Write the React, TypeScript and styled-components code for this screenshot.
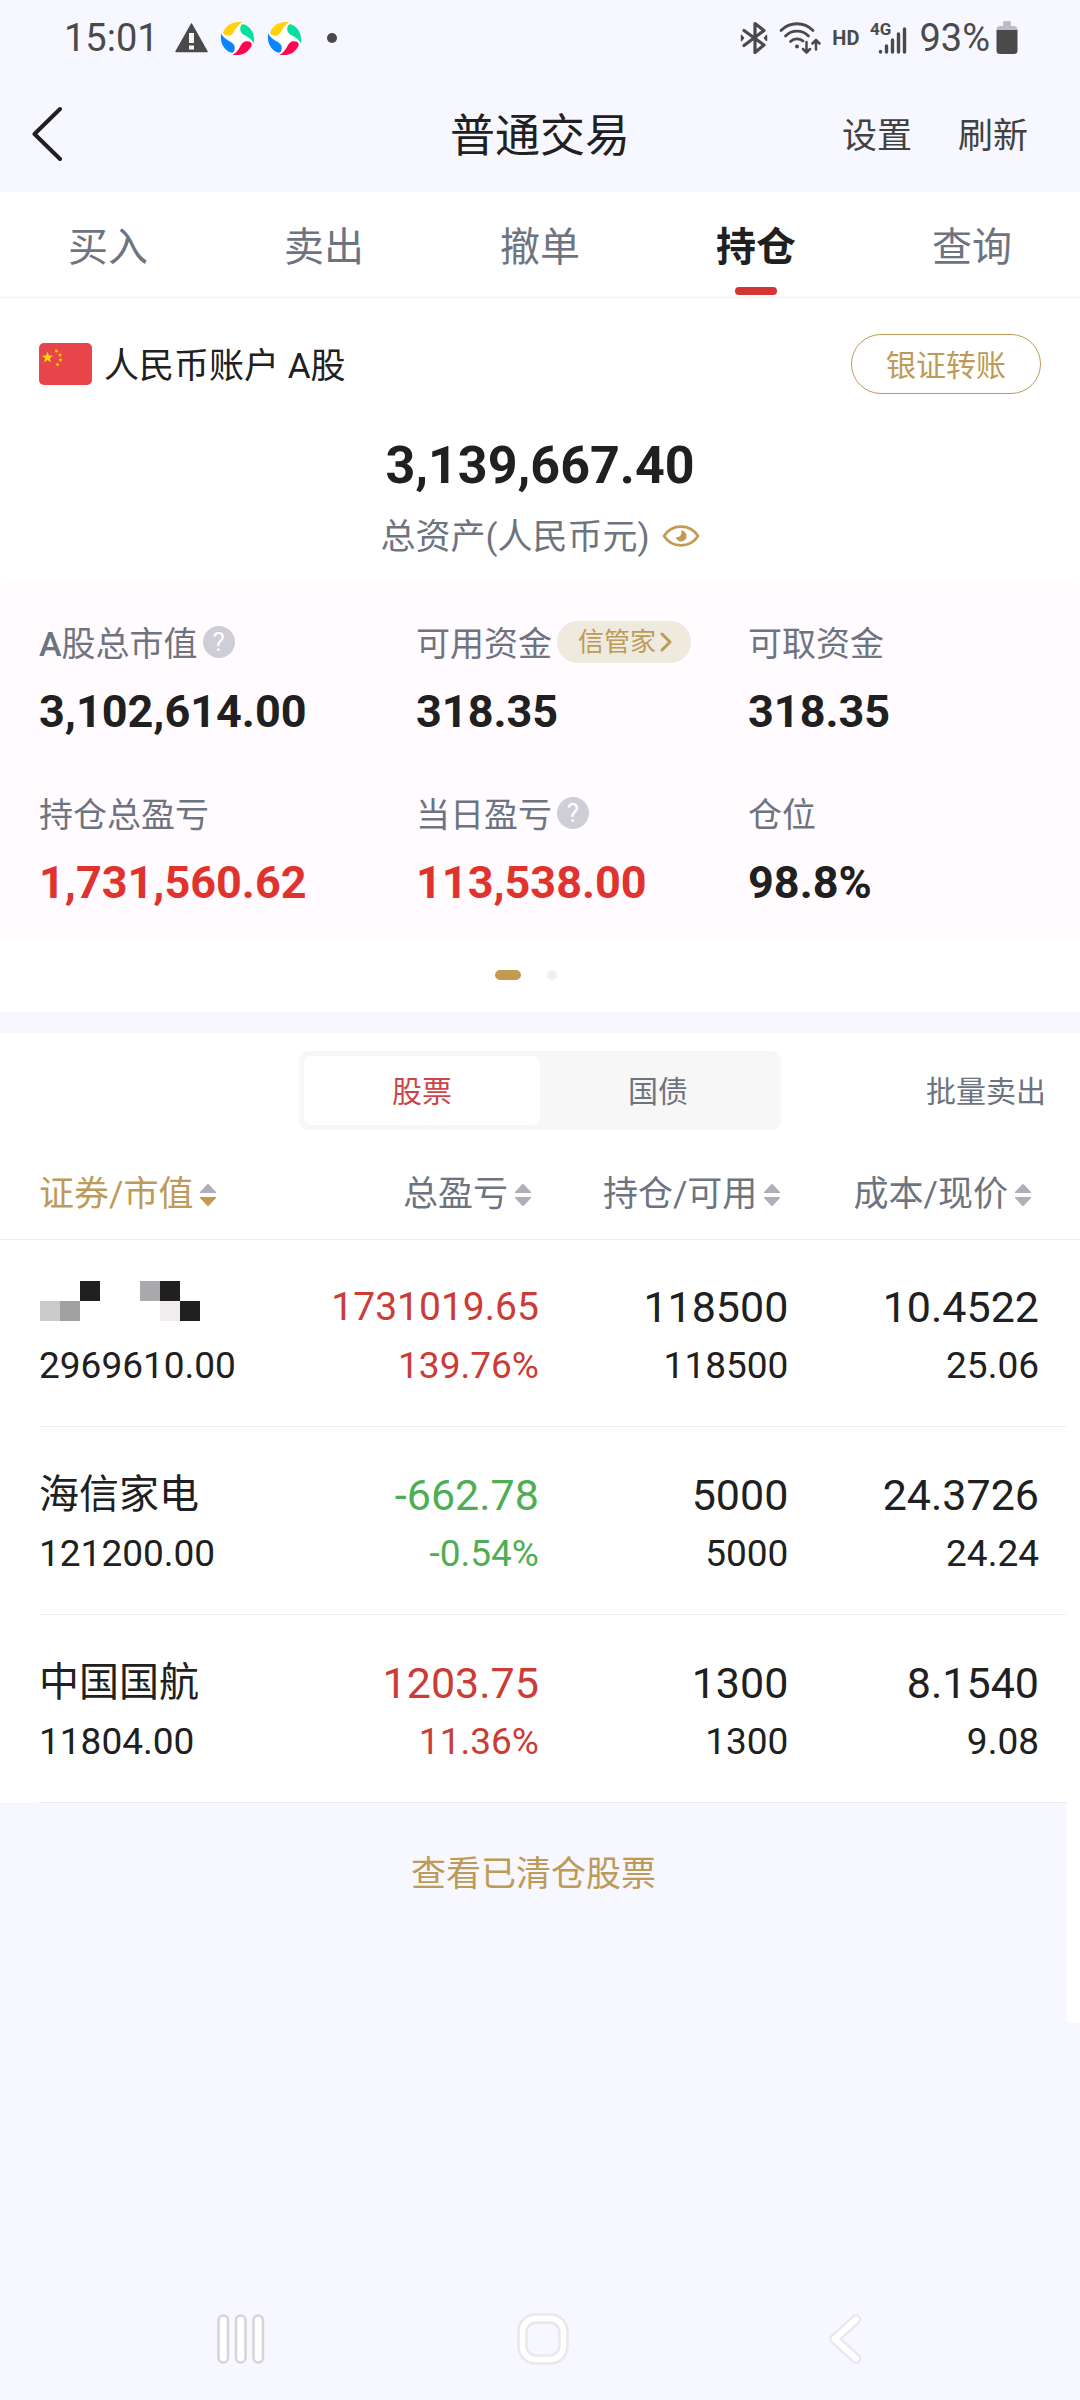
import React, { useState } from 'react';
import styled, { createGlobalStyle, css } from 'styled-components';

const color = {
  page: '#f7f7ff',
  ink: '#202020',
  muted: '#6e747f',
  gold: '#bd9a57',
  red: '#e1332e',
  rise: '#cc3b36',
  fall: '#4fae53',
  line: '#ededef',
};

const GlobalStyle = createGlobalStyle`
  * { box-sizing: border-box; }
  body {
    margin: 0;
    background: ${color.page};
    color: ${color.ink};
    font-family: Roboto, "Noto Sans CJK SC", sans-serif;
  }
  button {
    font: inherit;
    color: inherit;
    background: none;
    border: 0;
    padding: 0;
    cursor: pointer;
  }
  svg { display: block; flex: none; }
`;

const Page = styled.div`
  min-height: 100vh;
  display: flex;
  flex-direction: column;
`;

const StatusBar = styled.div`
  height: 76px;
  padding: 0 62px 0 64px;
  display: flex;
  align-items: center;
  justify-content: space-between;
  font-size: 38px;
  color: #4a4a4a;
`;

const StatusGroup = styled.div<{ $gap: number }>`
  display: flex;
  align-items: center;
  gap: ${(p) => p.$gap}px;
`;

const HdMark = styled.span`
  font-size: 20px;
  font-weight: 700;
`;

const Header = styled.header`
  height: 116px;
  padding: 0 52px 0 32px;
  display: grid;
  grid-template-columns: 1fr auto 1fr;
  align-items: center;
`;

const BackButton = styled.button`
  justify-self: start;
`;

const Title = styled.h1`
  margin: 0;
  padding: 6px 0 0 20px;
  font-size: 45px;
  font-weight: 400;
  line-height: 64px;
`;

const HeaderActions = styled.div`
  justify-self: end;
  padding-top: 6px;
  display: flex;
  gap: 46px;
  font-size: 35px;
  line-height: 48px;
  color: #414141;
`;

const Tabs = styled.nav`
  display: grid;
  grid-template-columns: repeat(5, 1fr);
  background: #fff;
  border-bottom: 1px solid #f2f2f5;
`;

const Tab = styled.button<{ $active: boolean }>`
  height: 105px;
  padding-top: 25px;
  display: flex;
  flex-direction: column;
  align-items: center;
  justify-content: space-between;
  font-size: 40px;
  line-height: 62px;
  color: ${color.muted};
  &::after {
    content: '';
    width: 42px;
    height: 8px;
    margin-bottom: 2px;
    border-radius: 4px;
  }
  ${(p) =>
    p.$active &&
    css`
      color: ${color.ink};
      font-weight: 700;
      &::after { background: #d33535; }
    `}
`;

const Account = styled.section`
  background: #fff;
`;

const AccountRow = styled.div`
  padding: 36px 39px 0;
  display: flex;
  align-items: center;
  justify-content: space-between;
`;

const AccountName = styled.div`
  display: flex;
  align-items: center;
  gap: 12px;
`;

const AccountText = styled.span`
  padding-top: 5px;
  font-size: 35px;
  line-height: 48px;
`;

const TransferButton = styled.button`
  height: 60px;
  padding: 0 34px 3px;
  border: 1px solid ${color.gold};
  border-radius: 30px;
  font-size: 30px;
  color: ${color.gold};
`;

const Total = styled.div`
  padding: 38px 0 19px;
  text-align: center;
`;

const TotalValue = styled.div`
  font-size: 52px;
  font-weight: 700;
  line-height: 68px;
`;

const TotalLabel = styled.div`
  margin-top: 10px;
  display: flex;
  align-items: center;
  justify-content: center;
  gap: 12px;
  color: ${color.muted};
`;

const TotalText = styled.span`
  padding-top: 3px;
  font-size: 35px;
  line-height: 49px;
`;

const Metrics = styled.dl`
  margin: 0;
  padding: 36px 39px 29px;
  display: grid;
  grid-template-columns: 377fr 332fr 293fr;
  row-gap: 48px;
  background: #fffbff;
  border-radius: 8px 8px 0 0;
`;

const MetricLabel = styled.dt`
  height: 50px;
  display: flex;
  align-items: center;
  gap: 5px;
  color: ${color.muted};
`;

const MetricText = styled.span`
  padding-top: 3px;
  font-size: 34px;
  line-height: 50px;
  white-space: nowrap;
`;

const MetricValue = styled.dd<{ $up?: boolean }>`
  margin: 17px 0 0;
  font-size: 45px;
  font-weight: 700;
  line-height: 56px;
  color: ${(p) => (p.$up ? color.red : color.ink)};
`;

const HelpButton = styled.button`
  width: 32px;
  height: 32px;
  border-radius: 50%;
  background: #cdced6;
  color: #fff;
  font-size: 26px;
  line-height: 32px;
`;

const Badge = styled.button`
  height: 42px;
  padding: 0 19px 0 21px;
  display: flex;
  align-items: center;
  gap: 4px;
  border-radius: 21px;
  background: #eeeade;
  font-size: 26px;
  line-height: 42px;
  color: ${color.gold};
`;

const Pager = styled.div`
  height: 72px;
  padding: 30px 28px 0 0;
  display: flex;
  justify-content: center;
  gap: 26px;
`;

const PagerDot = styled.span<{ $active?: boolean }>`
  width: ${(p) => (p.$active ? 26 : 10)}px;
  height: 10px;
  border-radius: 5px;
  background: ${(p) => (p.$active ? '#c29a50' : '#efeff5')};
`;

const Holdings = styled.section`
  margin-top: 21px;
  background: #fff;
`;

const HoldingsBar = styled.div`
  padding: 18px 34px;
  display: grid;
  grid-template-columns: 1fr 482px 1fr;
  align-items: center;
  font-size: 30px;
  color: ${color.muted};
`;

const Segments = styled.div`
  grid-column: 2;
  height: 79px;
  padding: 5px;
  display: grid;
  grid-template-columns: 1fr 1fr;
  border-radius: 11px;
  background: #f7f7f7;
`;

const Segment = styled.button<{ $active: boolean }>`
  padding-bottom: 4px;
  border-radius: 8px;
  background: ${(p) => (p.$active ? '#fff' : 'transparent')};
  color: ${(p) => (p.$active ? '#cf4449' : color.muted)};
`;

const BatchButton = styled.button`
  justify-self: end;
  padding-bottom: 4px;
`;

const Table = styled.table`
  width: 100%;
  table-layout: fixed;
  border-collapse: collapse;
`;

const ColumnHead = styled.th<{ $width: string }>`
  width: ${(p) => p.$width};
  height: 91px;
  padding: 4px 8px 0 0;
  border-bottom: 1px solid ${color.line};
  font-weight: 400;
  text-align: right;
  &:first-child { padding-left: 39px; text-align: left; }
  &:last-child { padding-right: 49px; }
`;

const SortButton = styled.button<{ $active: boolean }>`
  display: inline-flex;
  align-items: center;
  gap: 7px;
  font-size: 35px;
  line-height: 48px;
  white-space: nowrap;
  color: ${(p) => (p.$active ? color.gold : color.muted)};
`;

const Row = styled.tr`
  height: 188px;
  background: linear-gradient(${color.line}, ${color.line}) 39px 100% / calc(100% - 52px) 1px no-repeat;
`;

const tones = { rise: color.rise, fall: color.fall, plain: color.ink };

const Cell = styled.td<{ $tone?: keyof typeof tones }>`
  padding: 6px 0 0;
  text-align: right;
  vertical-align: middle;
  color: ${(p) => tones[p.$tone ?? 'plain']};
  &:first-child { padding-left: 39px; text-align: left; }
  &:last-child { padding-right: 41px; }
`;

const Primary = styled.div<{ $size?: number }>`
  height: 60px;
  font-size: ${(p) => p.$size ?? 43}px;
  line-height: 60px;
`;

const Secondary = styled.div`
  font-size: 37px;
  line-height: 58px;
`;

const Mask = styled.div`
  height: 60px;
  padding: 4px 0 0 1px;
`;

const Cleared = styled.section`
  height: 220px;
  padding-top: 48px;
  border-right: 13px solid #fff;
  text-align: center;
`;

const ClearedLink = styled.a`
  font-size: 35px;
  line-height: 48px;
  color: ${color.gold};
  text-decoration: none;
`;

const NavBar = styled.nav`
  margin-top: auto;
  height: 123px;
  padding: 0 84px 0 90px;
  display: grid;
  grid-template-columns: repeat(3, 1fr);
  justify-items: center;
  align-items: center;
`;

const NavButton = styled.button`
  display: block;
`;

const Latin = styled.span`
  font-weight: 500;
`;

function WarningIcon() {
  return (
    <svg width="33" height="30" viewBox="0 0 33 30">
      <path d="M16.5 1 L32 28.5 H1 Z" fill="#4a4a4a" stroke="#4a4a4a" strokeWidth="1.5" strokeLinejoin="round" />
      <path d="M14 10h5v10h-5zM14 22.5h5v4h-5z" fill={color.page} />
    </svg>
  );
}

function SwirlIcon() {
  const blade =
    'M3.4 10.6 C6.5 3.5 13.5 -0.3 22.5 1.2 C19.5 2.6 17.6 4.7 15.3 8.5 C13.8 11.2 12.6 13.6 10.2 14.4 C6.5 15.5 2.4 14 3.4 10.6 Z';
  const blades = ['#ffd20a', '#06dfa0', '#ff0550', '#0a84ff'];
  return (
    <svg width="35" height="35" viewBox="0 0 35 35">
      <circle cx="17.5" cy="17.5" r="16" fill="#fff" />
      {blades.map((fill, i) => (
        <path key={fill} d={blade} fill={fill} transform={`rotate(${i * 90} 17.5 17.5)`} />
      ))}
    </svg>
  );
}

function MoreDot() {
  return (
    <svg width="24" height="10" viewBox="0 0 24 10">
      <circle cx="18" cy="5" r="5" fill="#4a4a4a" />
    </svg>
  );
}

function BluetoothIcon() {
  return (
    <svg width="28" height="34" viewBox="0 0 28 34" fill="none" stroke="#4a4a4a" strokeWidth="3.2" strokeLinecap="round" strokeLinejoin="round">
      <path d="M4 9.5 L24 24 L15 31.5 V2.5 L24 9.5 L4 24.5" />
      <path d="M1.5 14.5 L3.5 17 L1.5 19.5 Z M26.5 14.5 L24.5 17 L26.5 19.5 Z" fill="#4a4a4a" strokeWidth="1.5" />
    </svg>
  );
}

function WifiIcon() {
  return (
    <svg width="42" height="34" viewBox="0 0 42 34" fill="none" stroke="#4a4a4a" strokeWidth="2.8" strokeLinecap="round" strokeLinejoin="round">
      <path d="M2 9.5 C11 0.5 25 0.5 34 9.5" />
      <path d="M6.5 15 C13 8.5 23 8.5 29.5 15" />
      <path d="M11.5 20.5 C15 17 21 17 24 20" />
      <circle cx="18" cy="25.5" r="2" fill="#4a4a4a" stroke="none" />
      <path d="M27.5 21 V31 M24 28 L27.5 31.5 L31 28 M37 28.5 V19.5 M33.5 22.5 L37 19 L40.5 22.5" strokeWidth="2.5" />
    </svg>
  );
}

function SignalIcon() {
  return (
    <svg width="38" height="40" viewBox="0 -3 38 40">
      <text x="0" y="14" fontFamily="Roboto, sans-serif" fontWeight="700" fontSize="17" fill="#4a4a4a">4G</text>
      <path
        d="M10.5 30.5 v0.5 M16.5 25 V31 M22.5 19 V31 M28.5 13 V31 M34.5 8 V31"
        stroke="#4a4a4a"
        strokeWidth="3.4"
        strokeLinecap="round"
      />
    </svg>
  );
}

function BatteryIcon() {
  return (
    <svg width="22" height="34" viewBox="0 0 22 34">
      <path d="M7 1.5 a1.5 1.5 0 0 1 1.5-1.5 h5 a1.5 1.5 0 0 1 1.5 1.5 V5 h3 a3.5 3.5 0 0 1 3.5 4 H0.5 a3.5 3.5 0 0 1 3.5-4 h3 Z" fill="#bcbcc1" />
      <path d="M0.5 9 h21 v20.5 a3.5 3.5 0 0 1-3.5 3.5 h-14 a3.5 3.5 0 0 1-3.5-3.5 Z" fill="#4a4a4a" />
    </svg>
  );
}

function ChevronLeft() {
  return (
    <svg width="32" height="56" viewBox="0 0 32 56" fill="none" stroke={color.ink} strokeWidth="4" strokeLinecap="round" strokeLinejoin="round">
      <path d="M28 3 L2.5 28 L28 53" />
    </svg>
  );
}

function starPoints(cx: number, cy: number, r: number, turn = 0) {
  return Array.from({ length: 10 }, (_, i) => {
    const radius = i % 2 ? r * 0.42 : r;
    const a = (Math.PI / 5) * i - Math.PI / 2 + turn;
    return `${(cx + radius * Math.cos(a)).toFixed(2)},${(cy + radius * Math.sin(a)).toFixed(2)}`;
  }).join(' ');
}

function Flag() {
  return (
    <svg width="53" height="42" viewBox="0 0 53 42">
      <rect width="53" height="42" rx="5" fill="#e8454b" />
      <g fill="#ffde00">
        <polygon points={starPoints(8.5, 14.5, 5.8)} />
        <polygon points={starPoints(17.5, 8, 2.2, 0.4)} />
        <polygon points={starPoints(21, 12, 2.2, 0.2)} />
        <polygon points={starPoints(21.5, 17, 2.2)} />
        <polygon points={starPoints(18.5, 21.5, 2.2, 0.3)} />
      </g>
    </svg>
  );
}

function EyeIcon() {
  return (
    <svg width="38" height="22" viewBox="0 0 38 22">
      <path d="M2 11 C10 -1.5 28 -1.5 36 11 C28 23.5 10 23.5 2 11 Z" fill="none" stroke="#c29a50" strokeWidth="2.6" strokeLinejoin="round" />
      <path d="M19 5.5 a5.5 5.5 0 1 1 -5.3 6.5 a4.5 4.5 0 0 0 5.3 -6.5 Z" fill="#c29a50" />
    </svg>
  );
}

function BadgeChevron() {
  return (
    <svg width="12" height="20" viewBox="0 0 12 20" fill="none" stroke={color.gold} strokeWidth="3" strokeLinecap="round" strokeLinejoin="round">
      <path d="M2 2 L10 10 L2 18" />
    </svg>
  );
}

function SortIcon({ active }: { active: boolean }) {
  return (
    <svg width="16" height="24" viewBox="0 0 16 24">
      <path d="M7 1.5 q1-1 2 0 L16 9 v1 H0 v-1 Z" fill="#adafba" />
      <path d="M7 22.5 q1 1 2 0 L16 15 v-1 H0 v1 Z" fill={active ? '#c29a50' : '#adafba'} />
    </svg>
  );
}

function MaskedName() {
  return (
    <svg width="160" height="40" viewBox="0 0 160 40" role="img" aria-label="***" shapeRendering="crispEdges">
      <rect x="0" y="20" width="20" height="20" fill="#cac9cc" />
      <rect x="20" y="20" width="20" height="20" fill="#a1a0a3" />
      <rect x="40" y="0" width="20" height="20" fill="#202020" />
      <rect x="100" y="0" width="20" height="20" fill="#a9a8ab" />
      <rect x="120" y="0" width="20" height="20" fill="#202020" />
      <rect x="120" y="20" width="20" height="20" fill="#f0ecf0" />
      <rect x="140" y="20" width="20" height="20" fill="#202020" />
    </svg>
  );
}

function RecentsIcon() {
  return (
    <svg width="48" height="50" viewBox="0 0 48 50" fill="#fff" stroke="#d5d5d9" strokeWidth="2.5">
      <rect x="1.5" y="1.5" width="9.5" height="47" rx="4.75" />
      <rect x="19" y="1.5" width="9.5" height="47" rx="4.75" />
      <rect x="36.5" y="1.5" width="9.5" height="47" rx="4.75" />
    </svg>
  );
}

function HomeIcon() {
  return (
    <svg width="52" height="52" viewBox="0 0 52 52" stroke="#e8e7ee" strokeWidth="2.5">
      <rect x="1.5" y="1.5" width="49" height="49" rx="17" fill="#fff" />
      <rect x="9.5" y="9.5" width="33" height="33" rx="10" fill={color.page} />
    </svg>
  );
}

function NavBackIcon() {
  return (
    <svg width="34" height="50" viewBox="0 0 34 50" fill="none" strokeLinecap="round" strokeLinejoin="round">
      <path d="M28 5.5 L6.5 25 L28 44.5" stroke="#e8e7ee" strokeWidth="10.5" />
      <path d="M28 5.5 L6.5 25 L28 44.5" stroke="#fff" strokeWidth="6" />
    </svg>
  );
}

const tabs = ['买入', '卖出', '撤单', '持仓', '查询'];
const segments = ['股票', '国债'];

type Holding = {
  name: string | null;
  value: string;
  profit: string;
  rate: string;
  tone: 'rise' | 'fall';
  shares: string;
  usable: string;
  cost: string;
  price: string;
};

const holdings: Holding[] = [
  { name: null, value: '2969610.00', profit: '1731019.65', rate: '139.76%', tone: 'rise', shares: '118500', usable: '118500', cost: '10.4522', price: '25.06' },
  { name: '海信家电', value: '121200.00', profit: '-662.78', rate: '-0.54%', tone: 'fall', shares: '5000', usable: '5000', cost: '24.3726', price: '24.24' },
  { name: '中国国航', value: '11804.00', profit: '1203.75', rate: '11.36%', tone: 'rise', shares: '1300', usable: '1300', cost: '8.1540', price: '9.08' },
];

const columns = [
  { label: '证券/市值', width: '26.9%' },
  { label: '总盈亏', width: '23%' },
  { label: '持仓/可用', width: '23.1%' },
  { label: '成本/现价', width: '27%' },
];

export default function App() {
  const [tab, setTab] = useState('持仓');
  const [segment, setSegment] = useState('股票');
  const [sort, setSort] = useState('证券/市值');

  return (
    <Page>
      <GlobalStyle />
      <StatusBar>
        <StatusGroup $gap={16}>
          <span>15:01</span>
          <StatusGroup $gap={12}>
            <WarningIcon />
            <SwirlIcon />
            <SwirlIcon />
            <MoreDot />
          </StatusGroup>
        </StatusGroup>
        <StatusGroup $gap={11}>
          <BluetoothIcon />
          <WifiIcon />
          <HdMark>HD</HdMark>
          <SignalIcon />
          <StatusGroup $gap={6}>
            <span>93%</span>
            <BatteryIcon />
          </StatusGroup>
        </StatusGroup>
      </StatusBar>

      <Header>
        <BackButton aria-label="返回"><ChevronLeft /></BackButton>
        <Title>普通交易</Title>
        <HeaderActions>
          <button>设置</button>
          <button>刷新</button>
        </HeaderActions>
      </Header>

      <Tabs>
        {tabs.map((t) => (
          <Tab key={t} $active={t === tab} onClick={() => setTab(t)}>{t}</Tab>
        ))}
      </Tabs>

      <Account>
        <AccountRow>
          <AccountName>
            <Flag />
            <AccountText>人民币账户 A股</AccountText>
          </AccountName>
          <TransferButton>银证转账</TransferButton>
        </AccountRow>
        <Total>
          <TotalValue>3,139,667.40</TotalValue>
          <TotalLabel>
            <TotalText>总资产(人民币元)</TotalText>
            <button aria-label="隐藏金额"><EyeIcon /></button>
          </TotalLabel>
        </Total>
        <Metrics>
          <div>
            <MetricLabel>
              <MetricText><Latin>A</Latin>股总市值</MetricText>
              <HelpButton>?</HelpButton>
            </MetricLabel>
            <MetricValue>3,102,614.00</MetricValue>
          </div>
          <div>
            <MetricLabel>
              <MetricText>可用资金</MetricText>
              <Badge>信管家<BadgeChevron /></Badge>
            </MetricLabel>
            <MetricValue>318.35</MetricValue>
          </div>
          <div>
            <MetricLabel><MetricText>可取资金</MetricText></MetricLabel>
            <MetricValue>318.35</MetricValue>
          </div>
          <div>
            <MetricLabel><MetricText>持仓总盈亏</MetricText></MetricLabel>
            <MetricValue $up>1,731,560.62</MetricValue>
          </div>
          <div>
            <MetricLabel>
              <MetricText>当日盈亏</MetricText>
              <HelpButton>?</HelpButton>
            </MetricLabel>
            <MetricValue $up>113,538.00</MetricValue>
          </div>
          <div>
            <MetricLabel><MetricText>仓位</MetricText></MetricLabel>
            <MetricValue>98.8%</MetricValue>
          </div>
        </Metrics>
        <Pager>
          <PagerDot $active />
          <PagerDot />
        </Pager>
      </Account>

      <Holdings>
        <HoldingsBar>
          <Segments>
            {segments.map((s) => (
              <Segment key={s} $active={s === segment} onClick={() => setSegment(s)}>{s}</Segment>
            ))}
          </Segments>
          <BatchButton>批量卖出</BatchButton>
        </HoldingsBar>
        <Table>
          <thead>
            <tr>
              {columns.map((c) => (
                <ColumnHead key={c.label} scope="col" $width={c.width}>
                  <SortButton $active={sort === c.label} onClick={() => setSort(c.label)}>
                    {c.label}
                    <SortIcon active={sort === c.label} />
                  </SortButton>
                </ColumnHead>
              ))}
            </tr>
          </thead>
          <tbody>
            {holdings.map((h) => (
              <Row key={h.value}>
                <Cell>
                  {h.name ? <Primary $size={40}>{h.name}</Primary> : <Mask><MaskedName /></Mask>}
                  <Secondary>{h.value}</Secondary>
                </Cell>
                <Cell $tone={h.tone}>
                  <Primary $size={h.profit.length > 9 ? 39 : 43}>{h.profit}</Primary>
                  <Secondary>{h.rate}</Secondary>
                </Cell>
                <Cell>
                  <Primary>{h.shares}</Primary>
                  <Secondary>{h.usable}</Secondary>
                </Cell>
                <Cell>
                  <Primary>{h.cost}</Primary>
                  <Secondary>{h.price}</Secondary>
                </Cell>
              </Row>
            ))}
          </tbody>
        </Table>
      </Holdings>

      <Cleared>
        <ClearedLink href="#cleared">查看已清仓股票</ClearedLink>
      </Cleared>

      <NavBar>
        <NavButton aria-label="最近任务"><RecentsIcon /></NavButton>
        <NavButton aria-label="主屏幕"><HomeIcon /></NavButton>
        <NavButton aria-label="返回上一页"><NavBackIcon /></NavButton>
      </NavBar>
    </Page>
  );
}
